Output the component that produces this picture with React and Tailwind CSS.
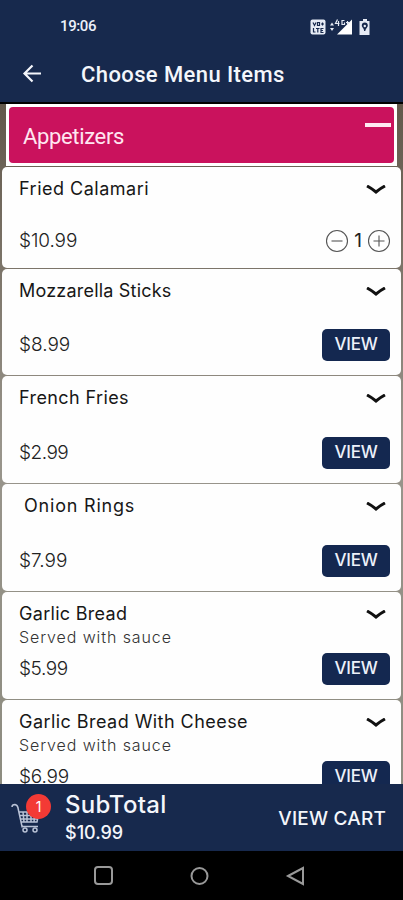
const items = [
  { name: "Fried Calamari", price: "$10.99", count: 1, height: "h-[101px]", nameStyle: "tracking-[0.5px]", priceStyle: "tracking-[-0.1px]" },
  { name: "Mozzarella Sticks", price: "$8.99", height: "h-[106px]", nameStyle: "tracking-[0.2px]", priceStyle: "tracking-[0px]" },
  { name: "French Fries", price: "$2.99", height: "h-[107px]", nameStyle: "tracking-[0.4px]", priceStyle: "tracking-[-0.5px]" },
  { name: "Onion Rings", price: "$7.99", height: "h-[107px]", nameStyle: "tracking-[0.8px] pl-[5px]", priceStyle: "tracking-[0px]" },
  { name: "Garlic Bread", note: "Served with sauce", price: "$5.99", height: "h-[107px]", nameStyle: "tracking-[0.3px]", priceStyle: "tracking-[-0.4px]" },
  { name: "Garlic Bread With Cheese", note: "Served with sauce", price: "$6.99", height: "h-[107px]", nameStyle: "tracking-[0.45px]", priceStyle: "tracking-[-0.2px]" },
];

const StatusIcons = () => {
  return (
    <svg width="62" height="18" viewBox="0 0 62 18" fill="none">
      <rect x="0.5" y="1.5" width="15" height="15" rx="2" fill="#e6ebf5" />
      <path d="M3 4.500l1.500 3 1.500-3M7.500 4.500h2v3h-2zM11 6h3M12.500 4.500v3M3.500 10v4h2M6 10.500h3.500M7.800 10.500V14.500M13.500 10.500h-2.500v4h2.500M11 12.500h2" stroke="#17294d" strokeWidth="1.2" />
      <path d="M20 7.500l2-3 2 3zM20 10l2 3 2-3z" fill="#e6ebf5" />
      <path d="M27 16.500L42 1.500V16.500z" fill="#fff" />
      <path d="M27.500 1.500L25.500 5.500h4M28.500 3v5M34.500 2.500h-2.500v4h2.500v-2M36 4.500h3M37.500 3v3" stroke="#e6ebf5" strokeWidth="1.2" />
      <path d="M51 3h2V1h4v2h2.500v14H49.500V3z" fill="#e6ebf5" />
      <path d="M54.800 4.500a3 3 0 0 1 3 3c0 2-2 2.500-2.500 5.500h-1.200c0-3-2.300-3.500-2.300-5.500a3 3 0 0 1 3-3z" fill="#17294d" />
      <circle cx="54.800" cy="8" r="1.200" fill="#e6ebf5" />
    </svg>
  );
};

const Chevron = () => {
  return (
    <svg className="mt-[18px]" width="20" height="11" viewBox="0 0 20 11" fill="none">
      <path d="M1 1Q5 3 10 7Q15 3 19 1" stroke="#111" strokeWidth="3" />
    </svg>
  );
};

const Counter = ({ count }) => {
  return (
    <div className="flex items-center">
      <svg width="24" height="24" viewBox="0 0 24 24" fill="none" stroke="#555" strokeWidth="1.1">
        <circle cx="12" cy="12" r="10.5" />
        <path d="M6.500 12h11" />
      </svg>
      <span className="w-[18px] text-center text-[19px] leading-6 text-[#222]">{count}</span>
      <svg width="24" height="24" viewBox="0 0 24 24" fill="none" stroke="#555" strokeWidth="1.1">
        <circle cx="12" cy="12" r="10.5" />
        <path d="M6.500 12h11M12 6.500v11" />
      </svg>
    </div>
  );
};

const MenuItem = ({ item }) => {
  return (
    <div className={`flex shrink-0 flex-col justify-between rounded-[5px] bg-[#fefefe] pl-[17px] ${item.height}`}>
      <div className="flex justify-between pr-[15px]">
        <div className="pt-[10px] whitespace-nowrap">
          <h2 className={`text-[18px] leading-6 text-[#171717] ${item.nameStyle}`}>{item.name}</h2>
          {item.note && (
            <p className="text-[16px] leading-[22px] tracking-[0.9px] font-light text-[#333]">{item.note}</p>
          )}
        </div>
        <Chevron />
      </div>
      <div className={item.count ? "flex items-center justify-between pr-[10px] pb-[15px]" : "flex items-center justify-between pr-[11px] pb-[14px]"}>
        <span className={`text-[19px] leading-6 font-light text-[#222] ${item.priceStyle}`}>{item.price}</span>
        {item.count ? (
          <Counter count={item.count} />
        ) : (
          <button className="flex h-8 w-[68px] items-center justify-center rounded-[5px] bg-[#142850] text-[17px] font-medium tracking-[-0.2px] text-[#edf1fa]">
            VIEW
          </button>
        )}
      </div>
    </div>
  );
};

const App = () => {
  return (
    <div className="flex h-[900px] w-[403px] flex-col overflow-hidden bg-black font-['Inter',sans-serif]">
      <header className="h-[102px] shrink-0 bg-[#17294d] font-['Roboto',sans-serif]">
        <div className="flex h-[53px] items-center justify-between pl-[60px] pr-[31px]">
          <span className="text-[15px] font-medium tracking-[-0.4px] text-[#edf1fa]">19:06</span>
          <StatusIcons />
        </div>
        <div className="flex h-[42px] items-center pl-[22px]">
          <svg className="-mt-[3px]" width="20" height="20" viewBox="0 0 20 20" fill="none" stroke="#f4f6fb" strokeWidth="2.2">
            <path d="M19 10.500H2.500M10.500 2.500l-8 8 8 8" />
          </svg>
          <h1 className="pl-[39px] text-[22px] font-medium tracking-[0.4px] whitespace-nowrap text-[#f4f6fb]">Choose Menu Items</h1>
        </div>
      </header>

      <main className="mt-[2px] flex h-[680px] flex-col overflow-hidden bg-linear-to-b from-[#62584b] via-[#99958c] to-[#8d8c80]">
        <div className="mx-[6px] h-[62px] shrink-0 border-[3px] border-white bg-white">
          <div className="flex h-full justify-between rounded-[4px] bg-[#ca125d] pl-[14px] pr-[3px]">
            <span className="pt-[14px] font-['Roboto',sans-serif] text-[22px] leading-8 tracking-[-0.35px] text-[#ffe6f1]">Appetizers</span>
            <span className="mt-[16px] h-[4px] w-[26px] bg-[#ffe9f3]"></span>
          </div>
        </div>
        <div className="mt-px mr-[2px] ml-[2px] flex flex-col gap-px">
          {items.map((item) => (
            <MenuItem key={item.name} item={item} />
          ))}
        </div>
      </main>

      <footer className="flex h-[67px] shrink-0 items-center bg-[#17294d] pl-[11px] pr-[17px] text-[#f4f6fb]">
        <div className="relative h-[48px] w-[41px]">
          <svg className="mt-[9px]" width="31" height="31" viewBox="0 0 31 31" fill="none" stroke="#b9c2d6" strokeWidth="1.5">
            <path d="M1 4Q1 1.500 4 1.500Q6.500 2 7 5L11 23.500H27M8 9H28L26 19H10M12 9l1 10M16 9v10M20 9v10M24 9l-1 10M9 12.500h18M9.500 16h17M11 22v2.500" />
            <circle cx="14" cy="27" r="2" />
            <circle cx="24" cy="27" r="2" />
          </svg>
          <span className="absolute top-[0px] left-[15px] flex h-[25px] w-[25px] items-center justify-center rounded-full bg-[#f33a35] text-[14px] text-white">
            1
          </span>
        </div>
        <div className="pl-[13px]">
          <p className="text-[24px] leading-[30px] font-medium tracking-[0.3px]">SubTotal</p>
          <p className="text-[18px] leading-[25px] font-medium">$10.99</p>
        </div>
        <button className="mt-[3px] ml-auto text-[19px] font-medium tracking-[0.2px] whitespace-nowrap">VIEW CART</button>
      </footer>

      <nav className="flex h-[49px] shrink-0 items-center pl-[93px] text-[#999]">
        <svg width="213" height="22" viewBox="0 0 213 22" fill="none" stroke="currentColor" strokeWidth="2">
          <rect x="2" y="2" width="17" height="17" rx="3" />
          <circle cx="106.500" cy="11" r="8" />
          <path d="M195 11l15-8v16z" />
        </svg>
      </nav>
    </div>
  );
};

export default App;
